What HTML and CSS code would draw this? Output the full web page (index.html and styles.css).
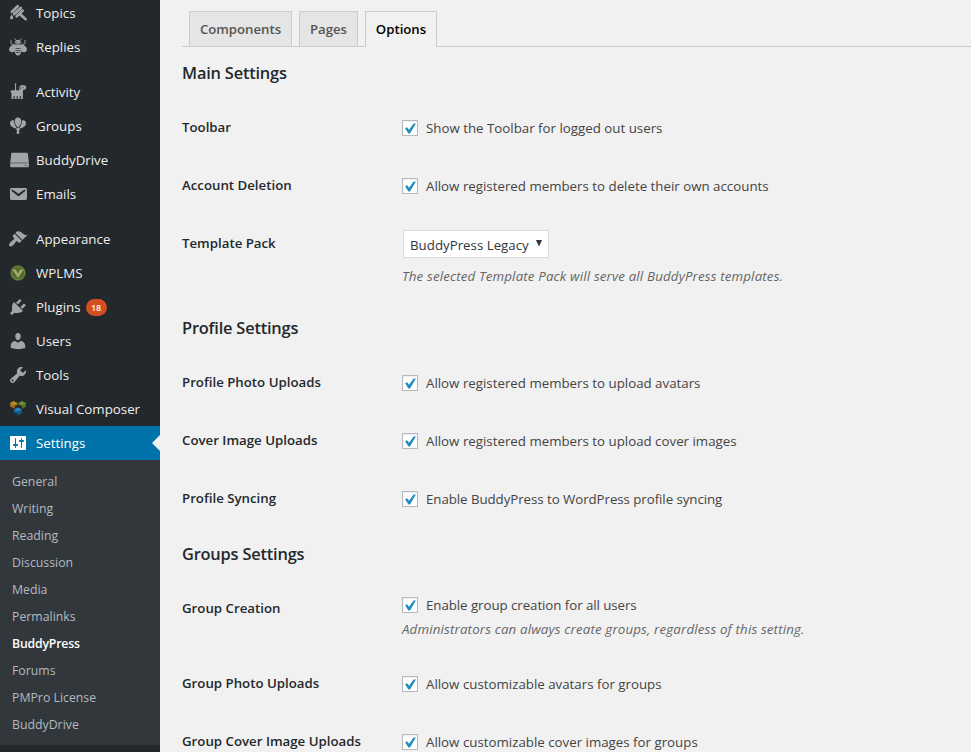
FILE: index.html
```html
<!DOCTYPE html>
<html lang="en">
<head>
<meta charset="utf-8">
<title>BuddyPress Settings</title>
<link rel="stylesheet" href="styles.css">
</head>
<body>
<div class="layout">
<nav class="sidebar">
<ul class="menu">
<li><a class="item"><svg class="icon" viewBox="0 0 20 20"><path class="brush" d="M3.800 8.900 9.700 3.300M6.200 11.100l6.600-6.200M8.700 13.300l6-5.700"/><path d="m12.800 9.800 5.900 5.600c1 1-.8 2.800-1.800 1.800L10.800 12zM3.700 11.500c.9 1.200 1.500 2.300 1.500 3.200 0 2-3.100 2-3.100 0 0-.9.700-2 1.600-3.200z"/></svg><span>Topics</span></a></li>
<li><a class="item"><svg class="icon" viewBox="0 0 20 20"><path d="M10 2.800c1.700 0 3 1 3.300 2.700L12 7.200c3.400-.2 6.900 2.400 6.900 5.300 0 2.200-2.200 3.300-4.200 2.500l-1.300-.8c-.2 2.200-1.600 4.300-3.400 4.300s-3.200-2.100-3.400-4.300l-1.300.8c-2 .8-4.200-.3-4.200-2.500 0-2.900 3.500-5.500 6.900-5.300L6.700 5.500C7 3.800 8.300 2.800 10 2.800z"/><path class="line" d="M8.200 3.500 6.500 1.500M11.800 3.500l1.700-2M6 8 3 6.500V3M14 8l3-1.500V3"/><path class="cut thin" d="M7.500 11.500h5M7.400 13.500h5.200M8 15.500h4M7.700 5h1.500M10.800 5h1.500M7 7.200h6"/></svg><span>Replies</span></a></li>
<li class="sep"><a class="item"><svg class="icon" viewBox="0 0 20 20"><path d="M7 1.300h1.100v6.900h3.300c-.4-1.800-.1-3.800 1.100-4.700.8-.6 3.500-.7 4.200.1 1.300.2 1.800 1.300 1.500 2.500-.2 1.100-1.300 1.700-2.900 1.500-.2.800-.4 1.500-.4 2.300v7h-2.100v-3h-1v3H9.700v-3h-1v3H6.600v-3h-1v3H3.500v-6c-.8-.5-1.100-1.800-.5-2.500C3.800 8.200 5.400 8.200 7 8.200z"/><path class="cut thin" d="M14.600 5.200h1.100M12.800 5v2.300"/></svg><span>Activity</span></a></li>
<li><a class="item"><svg class="icon" viewBox="0 0 20 20"><path d="M10 1.600c2 0 3.300 1.500 3.300 3.600 0 1.800-1.100 4-2.600 5.700h-1.400C7.800 9.200 6.700 7 6.700 5.200c0-2.100 1.300-3.600 3.300-3.600z"/><path d="M4.800 4.300c.5 0 .9.100 1.200.3 0 2.600 1 5.100 2.600 7l-.600.900C5 12.100 2 10 2 7.300c0-1.700 1.100-3 2.800-3zM15.200 4.300c-.5 0-.9.100-1.200.3 0 2.600-1 5.100-2.600 7l.6.900c3-.4 6-2.500 6-5.200 0-1.700-1.100-3-2.800-3zM8.700 11.700h2.600l.6 2-1 .8.6 2.200c.1.700-.6 1.200-1.100 1.200h-.8c-.5 0-1.200-.5-1.100-1.200l.6-2.200-1-.8z"/></svg><span>Groups</span></a></li>
<li><a class="item"><svg class="icon icon-wide" viewBox="0 0 22 20"><path d="M4.500 2.800h14c.8 0 1.300.4 1.400 1.100l1 8.800H2.200l1-8.800c.1-.7.600-1.100 1.300-1.100z"/><path d="M2.100 13.300H21v2.500c0 .9-.6 1.500-1.500 1.500h-16c-.9 0-1.400-.6-1.400-1.500z"/><path class="cut thin" d="M16.500 15.500h1M18.500 15.500h.8"/></svg><span>BuddyDrive</span></a></li>
<li><a class="item"><svg class="icon" viewBox="0 0 20 20"><path d="M3.870 4h13.250C18.370 4 19 4.590 19 5.790v8.420c0 1.190-.63 1.790-1.880 1.790H3.870c-1.250 0-1.880-.6-1.880-1.790V5.790c0-1.200.63-1.790 1.880-1.790zm6.620 8.600l6.740-5.530c.24-.2.430-.660.130-1.070-.29-.41-.82-.42-1.170-.17l-5.700 3.860L4.800 5.830c-.35-.25-.88-.24-1.170.17-.3.410-.11.870.13 1.070z"/></svg><span>Emails</span></a></li>
<li class="sep"><a class="item"><svg class="icon" viewBox="0 0 20 20"><path d="M14.480 11.060L7.410 3.990l1.500-1.500c.5-.56 2.300-.47 3.510.32 1.210.8 1.430 1.280 2.910 2.100 1.180.64 2.450 1.260 4.450.85zm-.71.71L6.700 4.700 4.930 6.470c-.39.39-.39 1.020 0 1.410l1.060 1.060c.39.39.39 1.030 0 1.420-.6.6-1.430 1.110-2.210 1.690-.35.26-.7.53-1.010.84C1.430 14.230.4 16.080 1.400 17.070c.99 1 2.840-.03 4.180-1.360.31-.31.58-.66.85-1.020.57-.78 1.080-1.610 1.690-2.210.39-.39 1.020-.39 1.410 0l1.060 1.060c.39.39 1.020.39 1.410 0z"/></svg><span>Appearance</span></a></li>
<li><a class="item"><svg class="icon" viewBox="0 0 20 20"><circle cx="10" cy="10" r="7.700" fill="#526b29"/><circle cx="10" cy="10" r="6.600" fill="none" stroke="#84945a" stroke-width=".6"/><path d="M4.500 6.500h3.200L10 10.800l2.300-4.300h3.200L10 15z" fill="#a9a978"/></svg><span>WPLMS</span></a></li>
<li><a class="item"><svg class="icon" viewBox="0 0 20 20"><path d="M13.110 4.360L9.870 7.600 8 5.730l3.240-3.240c.35-.34 1.050-.2 1.560.32.52.51.66 1.210.31 1.550zm-8 1.770l.91-1.120 9.010 9.010-1.190.84c-.71.71-2.630 1.160-3.820 1.160H6.140L4.900 17.260c-.59.59-1.540.59-2.120 0-.59-.58-.59-1.530 0-2.120l1.240-1.240v-3.880c0-1.130.4-3.190 1.090-3.890zm7.260 3.970l3.240-3.240c.34-.35 1.040-.21 1.550.31.52.51.66 1.210.31 1.550l-3.240 3.250z"/></svg><span>Plugins</span><b class="count">18</b></a></li>
<li><a class="item"><svg class="icon" viewBox="0 0 20 20"><path d="M10 9.250c-2.270 0-2.730-3.440-2.730-3.440C7 4.020 7.820 2 9.970 2c2.160 0 2.980 2.020 2.710 3.810 0 0-.41 3.440-2.680 3.440zm0 2.570L12.720 10c2.390 0 4.520 2.330 4.520 4.530v2.490s-3.650 1.130-7.240 1.130c-3.650 0-7.240-1.130-7.240-1.130v-2.490c0-2.250 1.940-4.480 4.470-4.480z"/></svg><span>Users</span></a></li>
<li><a class="item"><svg class="icon" viewBox="0 0 20 20"><path d="M16.680 9.770c-1.340 1.340-3.300 1.670-4.950.99l-5.410 6.520c-.99.99-2.590.99-3.580 0s-.99-2.590 0-3.570l6.520-5.420c-.68-1.650-.35-3.610.99-4.950 1.280-1.280 3.120-1.620 4.720-1.060l-2.890 2.890 2.820 2.820 2.860-2.870c.53 1.580.18 3.390-1.080 4.650zM3.810 16.210c.4.39 1.040.39 1.430 0 .4-.4.4-1.040 0-1.430-.39-.4-1.030-.4-1.430 0-.39.39-.39 1.030 0 1.430z"/></svg><span>Tools</span></a></li>
<li><a class="item"><svg class="icon" viewBox="0 0 20 20"><path d="M2 4l3.500-1.700L9.500 4v1.900L6.800 7.200v2.600L2 7.600z" fill="#9b6d20"/><path d="M2 4l3.500-1.700L9.500 4l-4 1.900z" fill="#bb8a2c"/><path d="m10.300 4 3.700-1.700L18 4v3.700l-4.300 2.400V7.200l-3.400-1.400z" fill="#50722a"/><path d="m10.300 4 3.700-1.700L18 4l-4 1.900z" fill="#6f9336"/><path d="m6 10.400 3.900-2 3.900 2v3.400l-4 3v-2.300L6 13.400z" fill="#135f8a"/><path d="m6 10.400 3.900-2 3.900 2-3.900 2z" fill="#2288bb"/></svg><span>Visual Composer</span></a></li>
<li><a class="item current"><svg class="icon" viewBox="0 0 20 20"><path d="M18 16V4c0-.55-.45-1-1-1H3c-.55 0-1 .45-1 1v12c0 .55.45 1 1 1h14c.55 0 1-.45 1-1zM8 11h1c.55 0 1 .45 1 1s-.45 1-1 1H8v1.500c0 .28-.22.5-.5.5s-.5-.22-.5-.5V13H6c-.55 0-1-.45-1-1s.45-1 1-1h1V5.500c0-.28.22-.5.5-.5s.5.220.5.5V11zm5-2h-1c-.55 0-1-.45-1-1s.45-1 1-1h1V5.500c0-.28.22-.5.5-.5s.5.220.5.5V7h1c.55 0 1 .45 1 1s-.45 1-1 1h-1v5.500c0 .28-.22.5-.5.5s-.5-.22-.5-.5V9z"/></svg><span>Settings</span></a>
<ul class="submenu"><li>General</li><li>Writing</li><li>Reading</li><li>Discussion</li><li>Media</li><li>Permalinks</li><li class="active">BuddyPress</li><li>Forums</li><li>PMPro License</li><li>BuddyDrive</li></ul></li>
</ul>
</nav>
<main class="content">
<div class="tabs"><a class="tab tab-components">Components</a><a class="tab tab-pages">Pages</a><a class="tab tab-options">Options</a></div>
<h2>Main Settings</h2>
<div class="row"><div class="label">Toolbar</div><label class="check"><input type="checkbox" checked><span>Show the Toolbar for logged out users</span></label></div>
<div class="row"><div class="label">Account Deletion</div><label class="check"><input type="checkbox" checked><span>Allow registered members to delete their own accounts</span></label></div>
<div class="row row-select"><div class="label">Template Pack</div><div><div class="select"><span>BuddyPress Legacy</span><svg viewBox="0 0 6 6"><path d="M0 0h6L3.300 6h-.6z"/></svg></div><p class="desc">The selected Template Pack will serve all BuddyPress templates.</p></div></div>
<h2>Profile Settings</h2>
<div class="row"><div class="label">Profile Photo Uploads</div><label class="check"><input type="checkbox" checked><span>Allow registered members to upload avatars</span></label></div>
<div class="row"><div class="label">Cover Image Uploads</div><label class="check"><input type="checkbox" checked><span>Allow registered members to upload cover images</span></label></div>
<div class="row"><div class="label">Profile Syncing</div><label class="check"><input type="checkbox" checked><span class="tight">Enable BuddyPress to WordPress profile syncing</span></label></div>
<h2>Groups Settings</h2>
<div class="row row-creation"><div class="label">Group Creation</div><div><label class="check"><input type="checkbox" checked><span class="tight">Enable group creation for all users</span></label><p class="desc">Administrators can always create groups, regardless of this setting.</p></div></div>
<div class="row"><div class="label">Group Photo Uploads</div><label class="check"><input type="checkbox" checked><span>Allow customizable avatars for groups</span></label></div>
<div class="row"><div class="label">Group Cover Image Uploads</div><label class="check"><input type="checkbox" checked><span>Allow customizable cover images for groups</span></label></div>
</main>
</div>
</body>
</html>
```
FILE: styles.css
```css
* { box-sizing: border-box; }
body { margin: 0; background: #f1f1f1; color: #444; font: 13.3px/20px "Open Sans", sans-serif; }
ul { list-style: none; margin: 0; padding: 0; }
p, h2 { margin: 0; }
.layout { display: flex; height: 752px; overflow: hidden; }
.sidebar { flex: 0 0 160px; background: #23282d; color: #eee; }
.menu { margin-top: -4px; }
.sep { margin-top: 11px; }
.item { display: flex; align-items: center; height: 34px; padding-left: 8px; white-space: nowrap; }
.icon { flex: none; width: 20px; height: 20px; margin-right: 8px; fill: #a0a5aa; }
.icon-wide { width: 22px; margin-right: 6px; }
.cut { fill: none; stroke: #23282d; stroke-width: .8; }
.thin { stroke-width: .7; }
.line { fill: none; stroke: #a0a5aa; stroke-width: .9; }
.brush { fill: none; stroke: #a0a5aa; stroke-width: 2.7; stroke-linecap: round; }
.current { position: relative; background: #0073aa; color: #fff; }
.current .icon { fill: #fff; }
.current::after { content: ""; position: absolute; right: 0; top: 9px; border: 8px solid transparent; border-left: 0; border-right-color: #f1f1f1; }
.count { margin-left: 5px; width: 21px; height: 17px; border-radius: 9px; background: #d54e21; color: #fff; font-size: 9px; font-weight: 600; line-height: 17px; text-align: center; }
.submenu { height: 285px; padding: 8px 12px; background: #32373c; color: #b4b9be; font-size: 12.3px; line-height: 27px; }
.submenu .active { color: #fff; font-weight: 600; letter-spacing: -.2px; }
.content { flex: 1; padding: 11px 0 0 22px; }
.tabs { display: flex; gap: 7px; height: 36px; padding-left: 7px; border-bottom: 1px solid #ccc; }
.tab { height: 35px; border: 1px solid #ccc; border-bottom: 0; background: #e5e5e5; color: #555; font-size: 13.2px; font-weight: 600; line-height: 35px; text-align: center; }
.tab-components { width: 103px; }
.tab-pages { width: 59px; }
.tab-options { width: 72px; height: 36px; background: #f1f1f1; color: #000; }
h2 { height: 52px; padding-top: 14px; color: #23282d; font-size: 16.4px; font-weight: 600; line-height: 26px; letter-spacing: -.2px; }
.tabs + h2 { height: 51px; padding-top: 13px; }
.row { display: grid; grid-template-columns: 220px 1fr; height: 58px; }
.label { padding-top: 19px; color: #23282d; font-size: 13.25px; font-weight: 600; }
.check { display: flex; align-items: center; gap: 8px; height: 16px; margin-top: 22px; }
.tight { letter-spacing: -.06px; }
input { appearance: none; flex: none; width: 16px; height: 16px; margin: 0; border: 1px solid #b4b9be; background: #fff; box-shadow: inset 0 1px 2px rgba(0,0,0,.07); }
input:checked::before { content: ""; display: block; width: 14px; height: 14px; background: #1e8cbe; clip-path: polygon(15% 52%, 29% 44%, 43% 63%, 76% 18%, 92% 18%, 50% 90%, 39% 90%); }
.row-select { height: 87px; }
.select { display: flex; align-items: center; justify-content: space-between; width: 146px; height: 28px; margin: 16px 0 0 1px; padding: 1px 6px 0; border: 1px solid #ddd; background: #fff; color: #32373c; }
.select svg { width: 6px; height: 6px; margin-top: -4px; fill: #32373c; }
.desc { color: #666; font-size: 13.3px; font-style: italic; letter-spacing: .16px; }
.row-select .desc { margin-top: 8px; }
.row-creation { height: 75px; }
.row-creation .check { margin-top: 18px; }
.row-creation .desc { margin-top: 6px; }
```
